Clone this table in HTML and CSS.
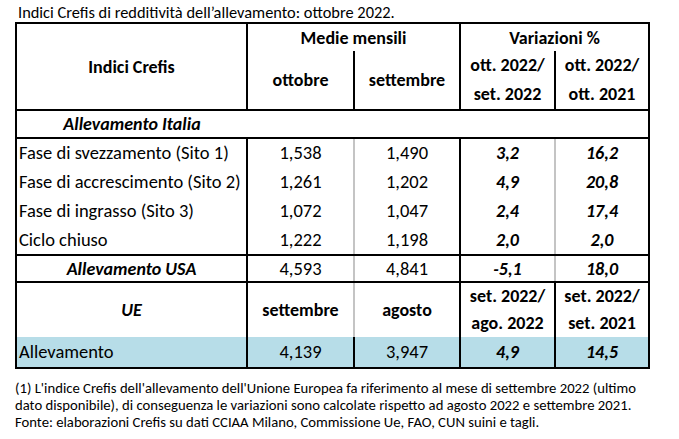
FILE: index.html
```html
<!DOCTYPE html>
<html lang="it">
<head>
<meta charset="utf-8">
<title>Indici Crefis</title>
<link rel="stylesheet" href="styles.css">
</head>
<body>
<div class="page">
  <p class="caption">Indici Crefis di redditività dell’allevamento: ottobre 2022.</p>
  <table class="tbl">
    <colgroup>
      <col class="w1"><col class="w2"><col class="w3"><col class="w4"><col class="w5">
    </colgroup>
    <tr class="hr1">
      <th rowspan="2" class="bl br">Indici Crefis</th>
      <th colspan="2" class="br">Medie mensili</th>
      <th colspan="2">Variazioni %</th>
    </tr>
    <tr class="hr2">
      <th class="br">ottobre</th>
      <th class="br">settembre</th>
      <th class="br two">ott. 2022/<br>set. 2022</th>
      <th class="two">ott. 2022/<br>ott. 2021</th>
    </tr>
    <tr class="sec">
      <td class="sect">Allevamento Italia</td>
      <td colspan="4"></td>
    </tr>
    <tr class="d first">
      <td class="name br">Fase di svezzamento (Sito 1)</td>
      <td class="gr">1,538</td>
      <td class="br">1,490</td>
      <td class="v gr">3,2</td>
      <td class="v">16,2</td>
    </tr>
    <tr class="d">
      <td class="name br">Fase di accrescimento (Sito 2)</td>
      <td class="gr">1,261</td>
      <td class="br">1,202</td>
      <td class="v gr">4,9</td>
      <td class="v">20,8</td>
    </tr>
    <tr class="d">
      <td class="name br">Fase di ingrasso (Sito 3)</td>
      <td class="gr">1,072</td>
      <td class="br">1,047</td>
      <td class="v gr">2,4</td>
      <td class="v">17,4</td>
    </tr>
    <tr class="d last">
      <td class="name br">Ciclo chiuso</td>
      <td class="gr">1,222</td>
      <td class="br">1,198</td>
      <td class="v gr">2,0</td>
      <td class="v">2,0</td>
    </tr>
    <tr class="usa">
      <td class="sect br">Allevamento USA</td>
      <td class="gr">4,593</td>
      <td class="br">4,841</td>
      <td class="v gr">-5,1</td>
      <td class="v">18,0</td>
    </tr>
    <tr class="ue">
      <td class="sect br">UE</td>
      <td class="b gr">settembre</td>
      <td class="b br">agosto</td>
      <td class="b br two">set. 2022/<br>ago. 2022</td>
      <td class="b two">set. 2022/<br>set. 2021</td>
    </tr>
    <tr class="blue">
      <td class="name br">Allevamento</td>
      <td class="br">4,139</td>
      <td class="br">3,947</td>
      <td class="v br">4,9</td>
      <td class="v">14,5</td>
    </tr>
  </table>
  <div class="notes">
    <p>(1) L'indice Crefis dell'allevamento dell'Unione Europea fa riferimento al mese di settembre 2022 (ultimo<br>dato disponibile), di conseguenza le variazioni sono calcolate rispetto ad agosto 2022 e settembre 2021.</p>
    <p>Fonte: elaborazioni Crefis su dati CCIAA Milano, Commissione Ue, FAO, CUN suini e tagli.</p>
  </div>
</div>
</body>
</html>
```

FILE: styles.css
```css
html, body {
  margin: 0;
  padding: 0;
  background: #fff;
}
body {
  font-family: "Carlito", "Lato", "Liberation Sans", sans-serif;
  color: #000;
}
.page {
  width: 679px;
  height: 439px;
  overflow: hidden;
}
.caption {
  margin: 0;
  padding: 2px 0 0 18px;
  height: 20px;
  font-size: 16.4px;
  line-height: 20px;
}
.tbl {
  margin-left: 15px;
  border-collapse: collapse;
  table-layout: fixed;
  width: 633px;
  border: 2px solid #000;
  font-size: 18.5px;
}
.w1 { width: 231px; }
.w2 { width: 107px; }
.w3 { width: 106px; }
.w4 { width: 95px; }
.w5 { width: 94px; }
th, td {
  padding: 0;
  text-align: center;
  vertical-align: middle;
  line-height: 22px;
  white-space: nowrap;
}
th { font-weight: bold; font-size: 18px; }
.br { border-right: 2px solid #000; }
.gr { border-right: 2px solid #c4c4c4; }
.hr1 th { height: 27px; }
.hr1 th[rowspan] { border-bottom: 2px solid #000; }
.hr2 th { height: 54px; border-bottom: 2px solid #000; }
.two { line-height: 29px; }
.sec td { height: 26px; border-bottom: 2px solid #000; }
.sect { font-weight: bold; font-style: italic; font-size: 18px; }
.d td { height: 28.75px; }
.name { text-align: left; padding-left: 2px; }
.v { font-weight: bold; font-style: italic; font-size: 18px; }
.b { font-weight: bold; font-size: 18px; }
.d.last td { border-bottom: 2px solid #000; }
.usa td { height: 25px; border-bottom: 2px solid #000; }
.ue td { height: 53px; }
.ue .two { line-height: 27px; }
.blue td { height: 30px; background: #b7dde8; }
.notes {
  padding: 11px 0 0 15px;
  font-size: 14.7px;
  line-height: 17px;
}
.notes p { margin: 0; white-space: nowrap; }
```
